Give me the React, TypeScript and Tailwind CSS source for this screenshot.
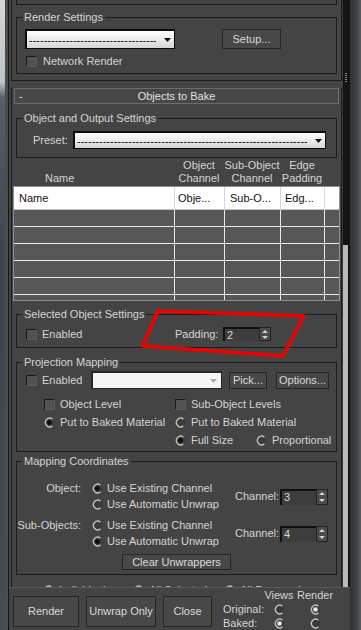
import React from "react";

type Kids = { className?: string; children?: React.ReactNode };

function Group({ title, className = "", children }: Kids & { title: string }) {
  return (
    <fieldset className={`mx-[4px] border border-[#1c1c1c] ${className}`}>
      <legend className="ml-[5px] px-[2px] leading-[12px]">{title}</legend>
      {children}
    </fieldset>
  );
}

function Check() {
  return (
    <span className="box-border inline-block h-[11px] w-[11px] shrink-0 border border-t-[#191919] border-l-[#191919] border-r-[#5c5c5c] border-b-[#5c5c5c] bg-[#525252]" />
  );
}

function Radio({ on, light }: { on?: boolean; light?: boolean }) {
  return (
    <svg width="11" height="11" viewBox="0 0 11 11" className="shrink-0">
      <circle cx="5.5" cy="5.5" r="4.6" fill="#3a3a3a" />
      <path d="M8.4 2.1 A4.3 4.3 0 1 0 8.4 8.9" fill="none" stroke="#bebebe" strokeWidth="1.4" />
      {on && <circle cx="5.5" cy="5.5" r="2.3" fill={light ? "#e8e8e8" : "#0c0c0c"} />}
    </svg>
  );
}

function Btn({ className = "", children }: Kids) {
  return (
    <button
      type="button"
      className={`flex shrink-0 items-center justify-center whitespace-nowrap border border-[#262626] bg-[#484848] text-[#d8d8d8] ${className}`}
    >
      {children}
    </button>
  );
}

function Combo({ className = "" }: Kids) {
  return (
    <div
      className={`flex shrink-0 items-center border-t-2 border-l-2 border-r border-b border-[#0c0c0c] bg-[linear-gradient(#ffffff,#d6d6d6)] pl-[2px] pr-[3px] ${className}`}
    >
      <span className="mr-[8px] flex-1 overflow-hidden whitespace-nowrap leading-[10px] text-[#111]">
        {"-".repeat(80)}
      </span>
      <svg width="7" height="4" viewBox="0 0 7 4">
        <polygon points="0,0 7,0 3.5,4" fill="#111" />
      </svg>
    </div>
  );
}

function Spinner({ value, className = "" }: { value: string; className?: string }) {
  return (
    <div className={`flex shrink-0 ${className}`}>
      <div className="w-[36px] border-t-2 border-l-2 border-[#101010] bg-[#3d3d3d] pl-[2px] text-[#d8d8d8]">
        {value}
      </div>
      <div className="flex w-[12px] flex-col items-center justify-around border border-[#222] bg-[#4b4b4b]">
        <svg width="6" height="3" viewBox="0 0 6 3">
          <polygon points="0,3 6,3 3,0" fill="#d4d4d4" />
        </svg>
        <svg width="6" height="3" viewBox="0 0 6 3">
          <polygon points="0,0 6,0 3,3" fill="#d4d4d4" />
        </svg>
      </div>
    </div>
  );
}

const cols = "grid grid-cols-[161px_50px_56px_44px_14px]";

function BakeTable() {
  return (
    <>
      <div className="ml-[1px] flex h-[28px] items-end pb-[1px]">
        <div className="w-[161px] pl-[32px]">Name</div>
        <div className="w-[50px] text-center">Object<br />Channel</div>
        <div className="w-[56px] whitespace-nowrap text-center">Sub-Object<br />Channel</div>
        <div className="w-[44px] text-center">Edge<br />Padding</div>
      </div>
      <div className="ml-[1px] w-[327px] border border-[#8e8e8e]">
        <div className={`${cols} h-[23px] border-b border-[#c4c4c4] bg-white text-[#111]`}>
          <div className="flex items-center border-r border-[#d6d6d6] pl-[5px]">Name</div>
          <div className="flex items-center border-r border-[#d6d6d6] pl-[3px]">Obje...</div>
          <div className="flex items-center border-r border-[#d6d6d6] pl-[5px]">Sub-O...</div>
          <div className="flex items-center border-r border-[#d6d6d6] pl-[4px]">Edg...</div>
          <div />
        </div>
        {[0, 1, 2, 3, 4].map((r) => (
          <div key={r} className={`${cols} h-[17px] border-b border-[#e8e8e8] bg-[#575757]`}>
            <div className="border-r border-[#e8e8e8]" />
            <div className="border-r border-[#e8e8e8]" />
            <div className="border-r border-[#e8e8e8]" />
            <div className="border-r border-[#e8e8e8]" />
            <div />
          </div>
        ))}
        <div className={`${cols} h-[5px] bg-[#575757]`}>
          <div className="border-r border-[#e8e8e8]" />
          <div className="border-r border-[#e8e8e8]" />
          <div className="border-r border-[#e8e8e8]" />
          <div className="border-r border-[#e8e8e8]" />
          <div />
        </div>
      </div>
    </>
  );
}

function Opt({ radio, on, label }: { radio?: boolean; on?: boolean; label: string }) {
  return (
    <div className="flex items-center whitespace-nowrap">
      {radio ? <Radio on={on} /> : <Check />}
      <span className="ml-[5px]">{label}</span>
    </div>
  );
}

function ChannelBlock({ label, first, value }: { label: string; first: boolean; value: string }) {
  return (
    <div className="flex items-start whitespace-nowrap">
      <div className="h-[15px] w-[64px] text-right leading-[15px]">{label}</div>
      <div className="ml-[11px] w-[143px]">
        <div className="flex h-[15px] items-center">
          <Radio on={first} />
          <span className="ml-[4px]">Use Existing Channel</span>
        </div>
        <div className="flex h-[16px] items-center">
          <Radio on={!first} />
          <span className="ml-[4px]">Use Automatic Unwrap</span>
        </div>
      </div>
      <div className="flex items-center self-center">
        <span>Channel:</span>
        <Spinner value={value} className="ml-[1px] h-[16px]" />
      </div>
    </div>
  );
}

function ScrollBar() {
  return (
    <div className="flex w-[8px] shrink-0">
      <div className="w-[1px] bg-[#393939]" />
      <div className="flex w-[5px] flex-col">
        <div className="flex h-[245px] flex-col gap-[1px] bg-[#141414] pl-[2px] pt-[73px]">
          {[0, 1, 2, 3, 4].map((i) => (
            <div key={i} className="h-[1px] w-[2px] bg-[#8a8a8a]" />
          ))}
        </div>
        <div className="flex-1 bg-[#b9b9b9]" />
      </div>
      <div className="w-[2px] bg-[#141414]" />
    </div>
  );
}

function BottomBar() {
  return (
    <div className="flex h-[43px] shrink-0 items-start border-t border-[#5a5a5a] pl-[4px] pt-[1px]">
      <div className="mt-[7px] flex gap-[7px]">
        <Btn className="h-[31px] w-[66px]">Render</Btn>
        <Btn className="h-[31px] w-[70px]">Unwrap Only</Btn>
        <Btn className="h-[31px] w-[49px]">Close</Btn>
      </div>
      <div className="ml-[11px] grid grid-cols-[38px_36px_36px] grid-rows-[13px_14px_14px] items-center whitespace-nowrap">
        <div />
        <div className="text-center">Views</div>
        <div className="text-center">Render</div>
        <div>Original:</div>
        <div className="flex justify-center"><Radio /></div>
        <div className="flex justify-center"><Radio on light /></div>
        <div>Baked:</div>
        <div className="flex justify-center"><Radio on light /></div>
        <div className="flex justify-center"><Radio /></div>
      </div>
    </div>
  );
}

export default function App() {
  return (
    <div className="relative flex h-[630px] w-[361px] overflow-hidden bg-[#3a3e42] font-['Liberation_Sans',Arial,sans-serif] text-[11px] leading-[13px] text-[#d4d4d4]">
      {/* desktop and window frame, left */}
      <div className="flex w-[9px] shrink-0">
        <div className="w-[5px] bg-[linear-gradient(180deg,#d3d7da_0%,#bfc4c8_13%,#55606a_15.5%,#3d4650_40%,#434c55_100%)]" />
        <div className="w-[3px] bg-[#4d4d4d]" />
        <div className="w-[1px] bg-[#161616]" />
      </div>

      <div className="flex w-[341px] shrink-0 flex-col bg-[#444444]">
        <div className="flex h-[587px] shrink-0">
          <div className="w-[333px] overflow-hidden">
            {/* tail of the previous rollout */}
            <div className="ml-[2px] w-[331px] border-x border-b border-[#1c1c1c] pb-[6px]">
              <div className="mx-[4px] h-[5px] border-x border-b border-[#1c1c1c]" />
              <Group title="Render Settings" className="mt-[6px] pb-[6px]">
                <div className="pl-[8px] pt-[6px]">
                  <div className="flex items-center">
                    <Combo className="h-[20px] w-[150px]" />
                    <Btn className="ml-[47px] h-[20px] w-[59px]">Setup...</Btn>
                  </div>
                  <div className="mt-[6px] flex h-[12px] items-center pl-[1px]">
                    <Check />
                    <span className="ml-[6px]">Network Render</span>
                  </div>
                </div>
              </Group>
            </div>

            {/* Objects to Bake rollout */}
            <div className="ml-[2px] mt-[7px] w-[331px] border-x border-[#1c1c1c]">
              <div className="mx-[2px] grid h-[16px] grid-cols-[18px_1fr_18px] items-center border border-[#6c6c6c] bg-[#474747] text-[#e2e2e2]">
                <span className="pl-[4px]">-</span>
                <span className="text-center">Objects to Bake</span>
                <span />
              </div>

              <Group title="Object and Output Settings" className="mt-[8px] pb-[8px]">
                <div className="mt-[7px] flex items-center pl-[16px]">
                  <span className="w-[40px]">Preset:</span>
                  <Combo className="h-[18px] w-[253px]" />
                </div>
              </Group>

              <BakeTable />

              <Group title="Selected Object Settings" className="mt-[7px] pb-[6px]">
                <div className="mt-[7px] flex h-[14px] items-center pl-[9px]">
                  <div className="flex w-[149px] items-center">
                    <Check />
                    <span className="ml-[5px]">Enabled</span>
                  </div>
                  <span className="w-[48px]">Padding:</span>
                  <Spinner value="2" className="h-[14px]" />
                </div>
              </Group>

              <Group title="Projection Mapping" className="mt-[8px] pb-[2px]">
                <div className="mt-[3px] flex h-[18px] items-center pl-[9px]">
                  <div className="flex w-[65px] items-center">
                    <Check />
                    <span className="ml-[5px]">Enabled</span>
                  </div>
                  <div className="flex h-[18px] w-[131px] items-center justify-end border-t-2 border-l-2 border-r border-b border-[#262626] bg-[#f5f5f5] pr-[4px]">
                    <svg width="7" height="4" viewBox="0 0 7 4">
                      <polygon points="0,0 7,0 3.5,4" fill="#a8a8a8" />
                    </svg>
                  </div>
                  <Btn className="ml-[7px] h-[17px] w-[38px]">Pick...</Btn>
                  <Btn className="ml-[9px] h-[17px] w-[53px]">Options...</Btn>
                </div>
                <div className="mt-[6px] grid grid-cols-[131px_81px_1fr] grid-rows-[18px_18px_18px] items-center pl-[27px]">
                  <Opt label="Object Level" />
                  <div className="col-span-2"><Opt label="Sub-Object Levels" /></div>
                  <Opt radio on label="Put to Baked Material" />
                  <div className="col-span-2"><Opt radio label="Put to Baked Material" /></div>
                  <div />
                  <Opt radio on label="Full Size" />
                  <Opt radio label="Proportional" />
                </div>
              </Group>

              <Group title="Mapping Coordinates" className="mt-[3px] pb-[4px]">
                <div className="mt-[14px]">
                  <ChannelBlock label="Object:" first value="3" />
                </div>
                <div className="mt-[6px]">
                  <ChannelBlock label="Sub-Objects:" first={false} value="4" />
                </div>
                <div className="mt-[5px] flex justify-center">
                  <Btn className="h-[16px] w-[109px]">Clear Unwrappers</Btn>
                </div>
              </Group>

              <div className="mt-[8px] flex h-[14px] items-center pl-[31px]">
                <div className="w-[90px]"><Opt radio label="Individual" /></div>
                <div className="w-[91px]"><Opt radio on label="All Selected" /></div>
                <Opt radio label="All Prepared" />
              </div>
              <div className="h-[20px]" />
            </div>
          </div>
          <ScrollBar />
        </div>
        <BottomBar />
      </div>

      {/* desktop, right */}
      <div className="w-[11px] shrink-0 bg-[linear-gradient(90deg,#2e3235,#3f4346_60%,#585c60)]" />

      {/* red hand-drawn markup over the padding field */}
      <svg className="pointer-events-none absolute left-0 top-0" width="361" height="630">
        <polygon
          points="158,311 304,316 283,356 143,346"
          fill="none"
          stroke="#f00000"
          strokeWidth="3.5"
          strokeLinejoin="round"
        />
      </svg>
    </div>
  );
}
